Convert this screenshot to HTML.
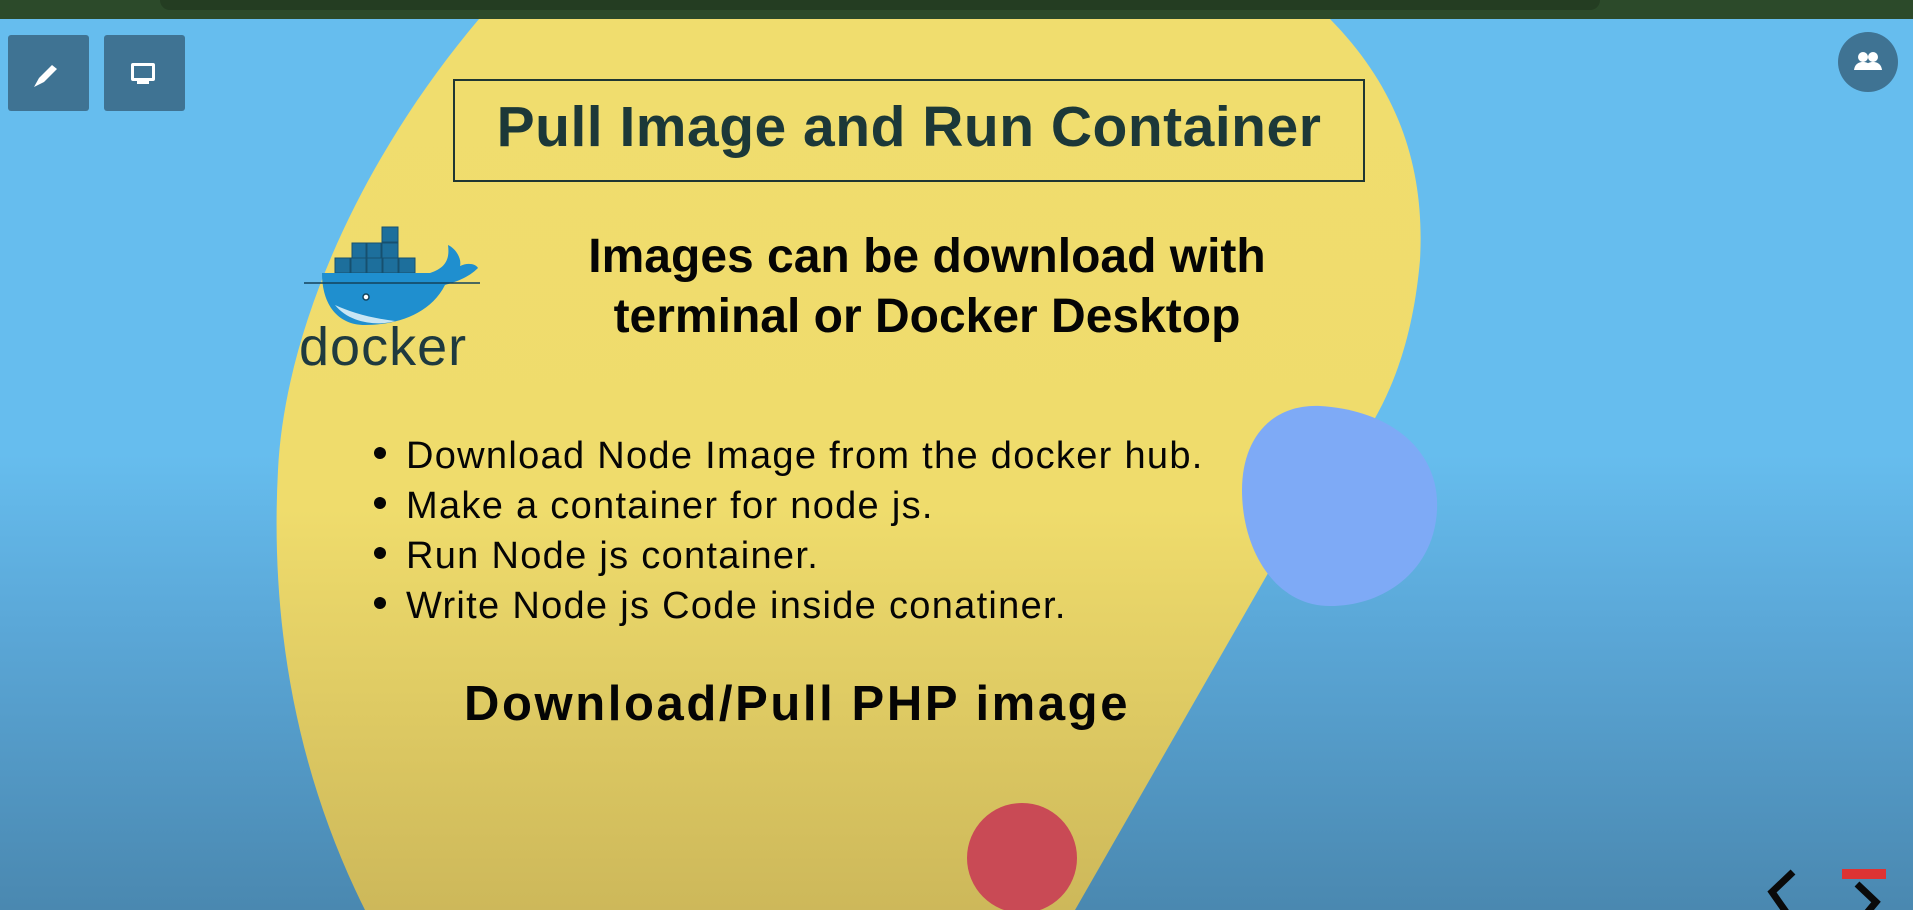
<!DOCTYPE html>
<html><head><meta charset="utf-8"><style>
html,body{margin:0;padding:0}
body{width:1913px;height:910px;position:relative;overflow:hidden;font-family:"Liberation Sans",sans-serif;background:linear-gradient(#66bdee 0%,#66bdee 50%,#5aa6d6 70%,#4a88b0 100%)}
.abs{position:absolute}
.t{position:absolute;white-space:nowrap;color:#050505}
</style></head><body>
<svg class="abs" style="left:0;top:0" width="1913" height="910">
<defs><linearGradient id="y" x1="0" y1="0" x2="0" y2="1"><stop offset="0" stop-color="#f0dd6e"/><stop offset="0.55" stop-color="#efdc6c"/><stop offset="1" stop-color="#cdb85a"/></linearGradient></defs>
<path d="M479 19 L1330 19 C1400 90 1425 170 1420 260 C1412 350 1385 430 1310 500 L1075 910 L365 910 C295 770 270 620 278 470 C285 330 360 160 479 19 Z" fill="url(#y)"/>
<path d="M1320 406 C1390 410 1440 450 1437 510 C1434 570 1385 606 1330 606 C1275 606 1242 550 1242 490 C1242 440 1270 404 1320 406 Z" fill="#7eaaf6"/>
<circle cx="1022" cy="858" r="55" fill="#c94a55"/>
<g fill="#1d6f9c" stroke="#16506f" stroke-width="1">
<rect x="382" y="227" width="16" height="15"/>
<rect x="352" y="243" width="14" height="15"/><rect x="367" y="243" width="14" height="15"/><rect x="382" y="243" width="16" height="15"/>
<rect x="335" y="258" width="15" height="15"/><rect x="351" y="258" width="15" height="15"/><rect x="367" y="258" width="15" height="15"/><rect x="383" y="258" width="15" height="15"/><rect x="399" y="258" width="16" height="15"/>
</g>
<path d="M322 273 L430 273 C445 268 450 260 448 245 C455 248 462 258 460 266 C468 262 476 264 478 268 C468 278 455 282 445 285 C430 315 395 325 365 325 C338 325 322 305 322 273 Z" fill="#1f8fcf"/>
<path d="M335 305 C350 312 370 318 395 321 C380 326 350 324 335 305 Z" fill="#c9e6f4"/>
<path d="M304 283 L480 283" stroke="#13425a" stroke-width="1.5"/>
<circle cx="366" cy="297" r="3" fill="#fff" stroke="#13425a" stroke-width="1.5"/>
<g fill="#050505"><circle cx="380" cy="453" r="6"/><circle cx="380" cy="503" r="6"/><circle cx="380" cy="553" r="6"/><circle cx="380" cy="603" r="6"/></g>
</svg>
<div class="abs" style="left:0;top:0;width:1913px;height:19px;background:#2c4a2a"></div>
<div class="abs" style="left:160px;top:0;width:1440px;height:10px;background:#243d22;border-radius:0 0 12px 12px"></div>
<div class="abs" style="left:8px;top:35px;width:81px;height:76px;background:#3f7393;border-radius:3px"></div>
<svg class="abs" style="left:30px;top:60px" width="36" height="30"><path d="M4 27 L9 18 L22 5 L27 9 L14 22 Z" fill="#fff"/></svg>
<div class="abs" style="left:104px;top:35px;width:81px;height:76px;background:#3f7393;border-radius:3px"></div>
<div class="abs" style="left:131px;top:63px;width:24px;height:18px;border:3px solid #fff;box-sizing:border-box;border-radius:2px"></div>
<div class="abs" style="left:137px;top:81px;width:12px;height:3px;background:#fff"></div>
<div class="abs" style="left:1838px;top:32px;width:60px;height:60px;border-radius:50%;background:#3f7393"></div>
<svg class="abs" style="left:1853px;top:48px" width="30" height="28"><g fill="#fff"><circle cx="10" cy="9" r="5"/><circle cx="20" cy="9" r="5"/><path d="M1 22 C2 15 7 14 10 14 C13 14 18 15 19 22 Z"/><path d="M11 22 C12 15 17 14 20 14 C23 14 28 15 29 22 Z"/></g></svg>
<div class="abs" style="left:453px;top:79px;width:912px;height:103px;border:2px solid #1f3632;box-sizing:border-box"></div>
<div class="t" style="left:453px;width:912px;text-align:center;top:99px;font-size:57px;font-weight:bold;color:#1c3838;line-height:1;letter-spacing:0.5px">Pull Image and Run Container</div>
<div class="t" style="left:299px;top:320px;font-size:54px;color:#1f3a3f;line-height:1;letter-spacing:1px">docker</div>
<div class="t" style="left:560px;width:734px;text-align:center;top:227px;font-size:48px;font-weight:bold;line-height:60px">Images can be download with<br>terminal or Docker Desktop</div>
<div class="t" style="left:406px;top:431px;font-size:38px;line-height:50px;letter-spacing:1.3px">Download Node Image from the docker hub.<br>Make a container for node js.<br>Run Node js container.<br>Write Node js Code inside conatiner.</div>
<div class="t" style="left:464px;top:680px;font-size:49px;font-weight:bold;line-height:1;letter-spacing:2.6px">Download/Pull PHP image</div>
<svg class="abs" style="left:1760px;top:866px" width="130" height="44"><path d="M33 6 L12 26 L26 46" fill="none" stroke="#0a0a0a" stroke-width="7"/><path d="M97 18 L116 36 L106 48" fill="none" stroke="#0a0a0a" stroke-width="7"/><rect x="82" y="3" width="44" height="10" fill="#d33"/></svg>
</body></html>
